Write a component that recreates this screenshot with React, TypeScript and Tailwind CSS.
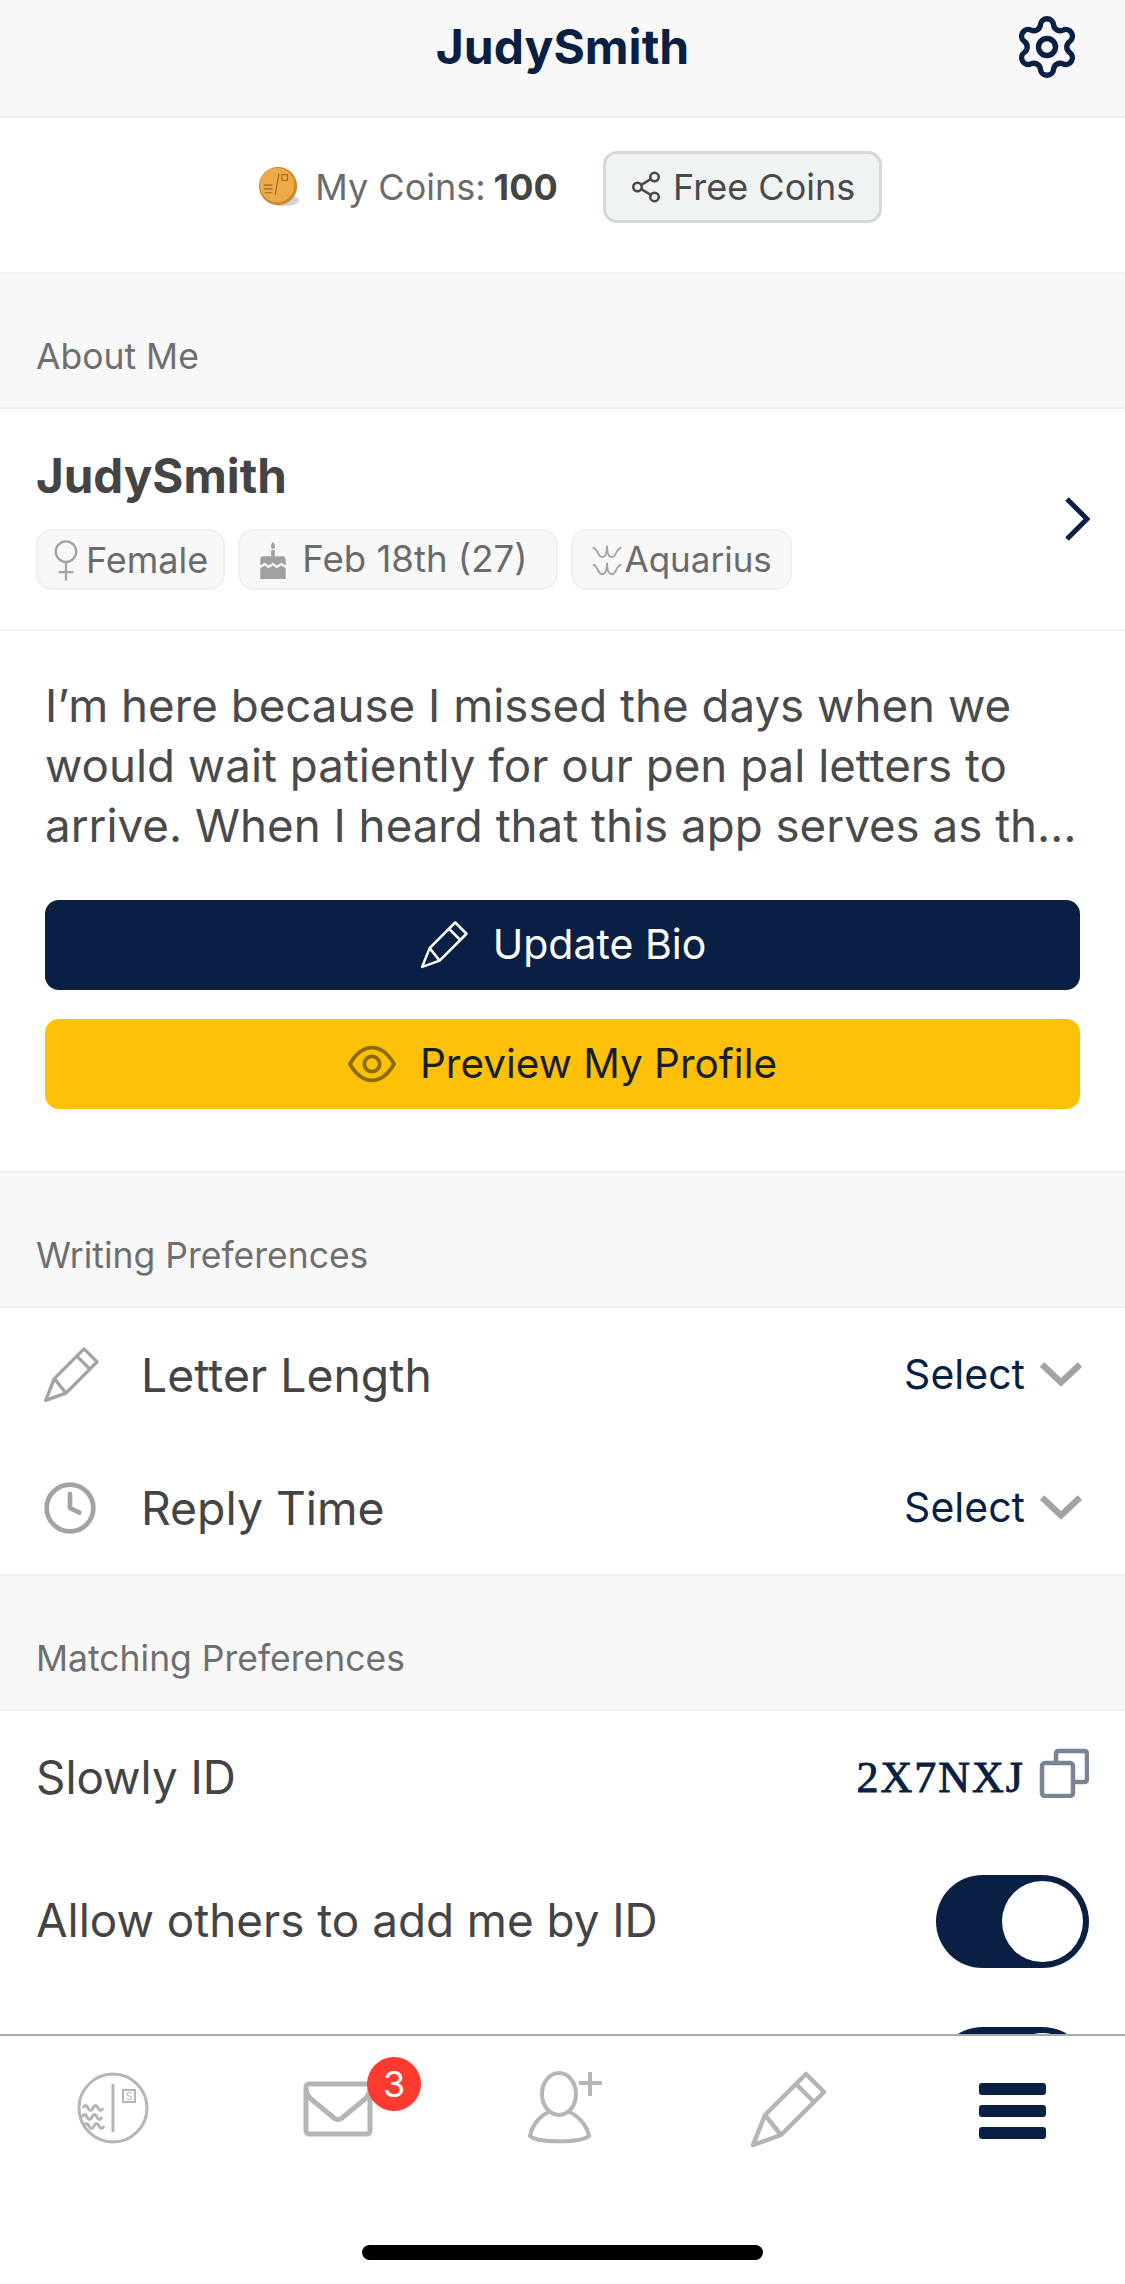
import { Settings, Share2, Clock } from 'lucide-react';

const navy = '#0a1f44';

function PencilIcon({ className, stroke = '#a3a3a3', width = 5 }: { className?: string; stroke?: string; width?: number }) {
  return (
    <svg viewBox="0 0 80 80" className={className} fill="none" stroke={stroke} strokeWidth={width} strokeLinejoin="round">
      <path d="M5 75 L17 45 L58 4 L76 22 L33 65 Z" />
      <path d="M48 14 L66 32" />
      <path d="M17 45 L33 65" />
    </svg>
  );
}

function CoinIcon() {
  return (
    <svg viewBox="0 0 44 44" className="h-[42px] w-[44px] shrink-0">
      <ellipse cx="28" cy="36" rx="15" ry="6" fill="#d4d4d4" />
      <circle cx="21" cy="21" r="20" fill="#c98a2b" />
      <circle cx="20" cy="20" r="18" fill="#eeaa48" />
      <path d="M22 8 L18 30" stroke="#9a6518" strokeWidth="1.2" />
      <rect x="25" y="9" width="6" height="6" fill="none" stroke="#9a6518" strokeWidth="1" />
      <path d="M6 20 h9 M6 24 h9 M7 28 h8" stroke="#9a6518" strokeWidth="1.2" />
    </svg>
  );
}

function Pill({ children, className }: { children: React.ReactNode; className: string }) {
  return (
    <div className={`flex h-[61px] items-center rounded-[16px] border-2 border-[#f0f0f0] bg-[#f8f8f8] text-[36px] text-[#6b6b6b] ${className}`}>
      {children}
    </div>
  );
}

function SectionTitle({ label }: { label: string }) {
  return (
    <div className="flex h-[137px] items-end border-t-2 border-b-2 border-[#f0f0f0] bg-[#f8f8f8] pb-[30px] pl-[36px] text-[35.5px] leading-[40px] text-[#6f6f6f]">
      {label}
    </div>
  );
}

function SelectRow({ icon, label }: { icon: React.ReactNode; label: string }) {
  return (
    <div className="flex h-[133px] items-center pr-[43px] pl-[42px]">
      <div className="flex w-[99px] shrink-0 items-center">{icon}</div>
      <span className="mt-[3px] flex-1 text-[46.3px] text-[#444444]">{label}</span>
      <span className="text-[41px] text-[#0a1f44]">Select</span>
      <svg viewBox="0 0 40 24" className="mb-[2px] ml-[15px] h-[26px] w-[42px]" fill="none" stroke="#a3a3a3" strokeWidth="6">
        <path d="M2 3 L20 20 L38 3" />
      </svg>
    </div>
  );
}

function Toggle() {
  return (
    <div className="relative h-[93px] w-[153px] shrink-0 rounded-full bg-[#0a1f44]">
      <div className="absolute top-[6px] right-[6px] h-[81px] w-[81px] rounded-full bg-white" />
    </div>
  );
}

export default function App() {
  return (
    <div className="flex h-[2284px] w-[1125px] flex-col overflow-hidden bg-white font-['Inter',sans-serif]">
      <main className="min-h-0 flex-1 overflow-hidden">
        <header className="relative flex h-[116px] items-start justify-center bg-[#f8f8f8] pt-[17px]">
          <h1 className="text-[48px] leading-[60px] font-bold text-[#0a1f44]">JudySmith</h1>
          <Settings className="absolute top-[13px] right-[44px] h-[68px] w-[68px]" color={navy} strokeWidth={1.9} />
        </header>

        <div className="flex h-[156px] items-center justify-center border-t-2 border-[#f0f0f0] pb-[16px] pl-[14px]">
          <CoinIcon />
          <span className="ml-[14px] text-[36px] text-[#6b6b6b]">My Coins: </span>
          <span className="ml-[8px] text-[36px] font-bold text-[#444444]">100</span>
          <button className="ml-[45px] flex h-[72px] w-[279px] items-center justify-center rounded-[14px] border-[3px] border-[#d5d8d9] bg-[#eff3f4] text-[36px] text-[#4a4a4a]">
            <Share2 className="mr-[10px] h-[34px] w-[34px]" color="#4a4a4a" strokeWidth={1.8} />
            Free Coins
          </button>
        </div>

        <SectionTitle label="About Me" />

        <div className="flex h-[220px] items-center justify-between pr-[35px] pl-[36px]">
          <div>
            <div className="text-[47.5px] leading-[56px] font-bold text-[#444444]">JudySmith</div>
            <div className="mt-[25px] flex gap-[13px]">
              <Pill className="pr-[15px] pl-[14px]">
                <svg viewBox="0 0 30 46" className="mr-[6px] h-[44px] w-[28px]" fill="none" stroke="#a3a3a3" strokeWidth="2.5">
                  <circle cx="15" cy="14" r="11" />
                  <path d="M15 25 V45 M7 36 H23" />
                </svg>
                Female
              </Pill>
              <Pill className="pr-[28px] pl-[18px]">
                <svg viewBox="0 0 30 44" className="mr-[14px] h-[40px] w-[30px]" fill="#a0a0a0">
                  <path d="M15 2 C18 6 18 9 15 10 C12 9 12 6 15 2 Z" />
                  <rect x="13" y="11" width="4" height="7" />
                  <path d="M4 18 H26 C28 18 29 20 29 22 V28 L24 25 L19 28 L15 25 L10 28 L6 25 L1 28 V22 C1 20 2 18 4 18 Z" />
                  <path d="M1 31 L6 28 L10 31 L15 28 L19 31 L24 28 L29 31 V43 H1 Z" />
                </svg>
                <span className="text-[36.6px]">Feb 18th (27)</span>
              </Pill>
              <Pill className="pr-[18px] pl-[18px]">
                <svg viewBox="0 0 32 38" className="mr-[2px] h-[36px] w-[32px]" fill="none" stroke="#a3a3a3" strokeWidth="2">
                  <path d="M1 6 C6 6 6 16 11 16 C15 16 16 10 16 4 C16 10 17 16 21 16 C26 16 26 6 31 6" />
                  <path d="M1 24 C6 24 6 34 11 34 C15 34 16 28 16 22 C16 28 17 34 21 34 C26 34 26 24 31 24" />
                </svg>
                <span className="text-[35px]">Aquarius</span>
              </Pill>
            </div>
          </div>
          <svg viewBox="0 0 26 44" className="h-[44px] w-[26px]" fill="none" stroke={navy} strokeWidth="5">
            <path d="M3 2 L23 22 L3 42" />
          </svg>
        </div>

        <div className="border-t-2 border-[#f0f0f0] px-[45px] pt-[45px] pb-[62px]">
          <p className="text-[45.7px] leading-[60px] text-[#4a4a4a]">
            I’m here because I missed the days when we would wait patiently for our pen pal letters to arrive. When I heard that this app serves as th…
          </p>
          <button className="mt-[44px] flex h-[90px] w-full items-center justify-center rounded-[14px] bg-[#0a1f44] text-[41px] text-white">
            <PencilIcon className="mr-[24px] h-[50px] w-[50px]" stroke="#ffffff" width={4} />
            Update Bio
          </button>
          <button className="mt-[29px] flex h-[90px] w-full items-center justify-center rounded-[14px] bg-[#ffc107] text-[40.5px] text-[#15202b]">
            <svg viewBox="0 0 50 38" className="mr-[24px] h-[38px] w-[48px]" fill="none" stroke="#8a6d08" strokeWidth="4">
              <path d="M2 19 C9 7 17 2 25 2 C33 2 41 7 48 19 C41 31 33 36 25 36 C17 36 9 31 2 19 Z" />
              <circle cx="25" cy="19" r="8" />
            </svg>
            Preview My Profile
          </button>
        </div>

        <SectionTitle label="Writing Preferences" />
        <SelectRow label="Letter Length" icon={<PencilIcon className="h-[58px] w-[58px]" width={4.5} />} />
        <SelectRow label="Reply Time" icon={<Clock className="h-[56px] w-[56px]" color="#a3a3a3" strokeWidth={2} />} />

        <SectionTitle label="Matching Preferences" />

        <div className="flex h-[134px] items-center justify-between pr-[36px] pl-[36px]">
          <span className="text-[45.8px] text-[#444444]">Slowly ID</span>
          <div className="flex items-center">
            <span className="font-['Liberation_Serif',serif] text-[44px] tracking-[2px] text-[#0a1f44] [-webkit-text-stroke:0.9px_#0a1f44]">2X7NXJ</span>
            <svg viewBox="0 0 50 50" className="-mt-[10px] ml-[14px] h-[50px] w-[50px]" fill="none" stroke="#7a8296" strokeWidth="4.5">
              <path d="M17 15 V6 C17 4 18 3 20 3 H45 C47 3 48 4 48 6 V31 C48 33 47 34 45 34 H35" />
              <rect x="3" y="15" width="31" height="33" rx="3" />
            </svg>
          </div>
        </div>

        <div className="flex h-[152px] items-center justify-between pr-[36px] pl-[36px]">
          <span className="text-[45.8px] text-[#444444]">Allow others to add me by ID</span>
          <Toggle />
        </div>

        <div className="flex h-[152px] items-start justify-end pt-[30px] pr-[36px]">
          <Toggle />
        </div>
      </main>

      <nav className="h-[250px] shrink-0 border-t-2 border-[#aaaaaa] bg-white">
        <div className="grid h-[146px] grid-cols-5 items-center">
          <div className="flex justify-center">
            <svg viewBox="0 0 72 72" className="mb-[2px] h-[72px] w-[72px]" fill="none" stroke="#b5b5b5" strokeWidth="3">
              <circle cx="36" cy="36" r="34" />
              <path d="M36 12 V60" />
              <rect x="46" y="18" width="12" height="12" strokeWidth="2" />
              <text x="52" y="28" textAnchor="middle" fontSize="10" fontFamily="Inter, sans-serif" fill="#b5b5b5" stroke="none">S</text>
              <path d="M6 36 q2.5 -5 5 0 t5 0 t5 0 t5 0 M5 45 q2.5 -5 5 0 t5 0 t5 0 t5 0 M7 54 q2.5 -5 5 0 t5 0 t5 0 t5 0" />
            </svg>
          </div>
          <div className="relative flex justify-center">
            <svg viewBox="0 0 70 56" className="h-[56px] w-[70px]" fill="none" stroke="#b5b5b5" strokeWidth="5" strokeLinejoin="round">
              <rect x="3" y="3" width="64" height="50" rx="3" />
              <path d="M3 9 Q4 14 8 18 L31 37 Q35 40 39 37 L62 18 Q66 14 67 9" />
            </svg>
            <div className="absolute top-[-24px] left-[142px] flex h-[54px] w-[54px] items-center justify-center rounded-full bg-[#ff3b30] text-[36px] text-white">
              3
            </div>
          </div>
          <div className="mb-[4px] ml-[4px] flex justify-center">
            <svg viewBox="0 0 76 74" className="h-[74px] w-[76px]" fill="none" stroke="#b5b5b5" strokeWidth="4">
              <ellipse cx="32" cy="24" rx="17" ry="21" />
              <path d="M22 42 C12 46 5 56 3 66 C10 73 54 73 62 66 C60 56 52 46 42 42" />
              <path d="M63 2 V26 M52 13 H75" />
            </svg>
          </div>
          <div className="flex justify-center">
            <PencilIcon className="mt-[2px] h-[80px] w-[80px]" stroke="#b5b5b5" width={4.5} />
          </div>
          <div className="flex justify-center">
            <div className="mt-[3px] flex w-[67px] flex-col gap-[10px]">
              <div className="h-[12px] rounded-[3px] bg-[#0a1f44]" />
              <div className="h-[12px] rounded-[3px] bg-[#0a1f44]" />
              <div className="h-[12px] rounded-[3px] bg-[#0a1f44]" />
            </div>
          </div>
        </div>
        <div className="mt-[63px] flex justify-center">
          <div className="h-[15px] w-[401px] rounded-full bg-black" />
        </div>
      </nav>
    </div>
  );
}
